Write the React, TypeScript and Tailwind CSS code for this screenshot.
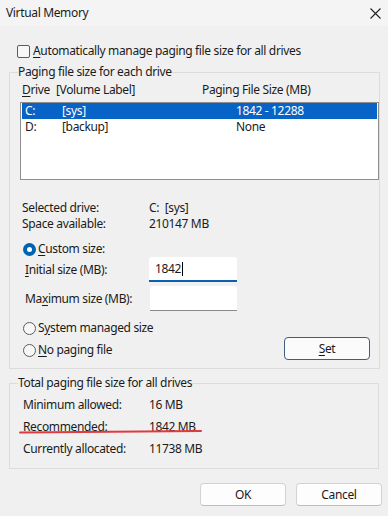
import React from "react";

function Radio({ checked }: { checked?: boolean }) {
  return checked ? (
    <span className="w-[13px] h-[13px] rounded-full bg-[#0063b1] flex items-center justify-center shrink-0">
      <span className="w-[5px] h-[5px] rounded-full bg-white" />
    </span>
  ) : (
    <span className="w-[13px] h-[13px] rounded-full border border-[#5c5c5c] bg-[#f7f7f7] shrink-0" />
  );
}

export default function App() {
  return (
    <div className="relative w-[388px] h-[516px] overflow-hidden bg-[#f0f0f0] text-[12px] leading-[16px] tracking-[-0.35px] text-[#1b1b1b] font-['Noto_Sans',sans-serif]">
      {/* Title bar */}
      <div className="h-[26px] bg-[#f4f4f4] flex items-center justify-between pl-[6px] pr-[6px]">
        <span className="text-[12px]">Virtual Memory</span>
        <svg width="11" height="11" viewBox="0 0 11 11" className="mr-[1px]">
          <path d="M0.5 0.5 L10.5 10.5 M10.5 0.5 L0.5 10.5" stroke="#222" strokeWidth="1.1" />
        </svg>
      </div>

      {/* Checkbox */}
      <div className="mt-[17px] ml-[17px] flex items-center gap-[3px] h-[16px]">
        <span className="w-[13px] h-[13px] rounded-[2px] border border-[#5c5c5c] bg-[#f7f7f7] shrink-0" />
        <span>
          <span className="underline underline-offset-2">A</span>utomatically manage paging file size for all drives
        </span>
      </div>

      {/* Group 1 */}
      <fieldset className="mt-[5px] ml-[9px] w-[370px] border border-[#dcdcdc] pb-[8px]">
        <legend className="ml-[8px] px-0 leading-[16px]">Paging file size for each drive</legend>
        <div className="mt-[2px] pl-[12px] flex h-[16px]">
          <span className="w-[34px]">
            <span className="underline underline-offset-2">D</span>rive
          </span>
          <span className="w-[146px]">[Volume Label]</span>
          <span>Paging File Size (MB)</span>
        </div>
        <div className="mt-[4px] ml-[10px] w-[359px] h-[78px] border border-[#8e8e8e] bg-white">
          <div className="flex h-[16px] items-center bg-[#0863c6] text-white pl-[3px] mx-[1px]">
            <span className="w-[37px]">C:</span>
            <span className="w-[174px]">[sys]</span>
            <span>1842 - 12288</span>
          </div>
          <div className="flex h-[16px] items-center pl-[3px] mx-[1px]">
            <span className="w-[37px]">D:</span>
            <span className="w-[174px]">[backup]</span>
            <span>None</span>
          </div>
        </div>

        <div className="mt-[20px] pl-[12px]">
          <div className="flex h-[16px]">
            <span className="w-[127px]">Selected drive:</span>
            <span>C:&nbsp;&nbsp;[sys]</span>
          </div>
          <div className="flex h-[16px]">
            <span className="w-[127px]">Space available:</span>
            <span>210147 MB</span>
          </div>
        </div>

        <div className="mt-[9px] pl-[13px] flex items-center gap-[2px] h-[16px]">
          <Radio checked />
          <span>
            <span className="underline underline-offset-2">C</span>ustom size:
          </span>
        </div>

        <div className="flex items-center h-[25px] pl-[15px]">
          <span className="w-[124px]">
            <span className="underline underline-offset-2">I</span>nitial size (MB):
          </span>
          <div className="w-[88px] h-[25px] bg-white rounded-t-[3px] border-b-2 border-[#0a5fb0] flex items-center pl-[6px]">
            <span>1842</span>
            <span className="w-[1px] h-[14px] bg-black ml-[1px]" />
          </div>
        </div>

        <div className="mt-[4px] flex items-center h-[25px] pl-[15px]">
          <span className="w-[125px]">
            Ma<span className="underline underline-offset-2">x</span>imum size (MB):
          </span>
          <div className="w-[87px] h-[25px] bg-white rounded-t-[3px] border-b border-[#8a8a8a]" />
        </div>

        <div className="mt-[9px] pl-[13px] flex items-center gap-[2px] h-[16px]">
          <Radio />
          <span>
            S<span className="underline underline-offset-2">y</span>stem managed size
          </span>
        </div>

        <div className="mt-[1px] flex items-center justify-between pr-[9px]">
          <div className="pl-[13px] mt-[3px] flex items-center gap-[2px] h-[16px]">
            <Radio />
            <span>
              <span className="underline underline-offset-2">N</span>o paging file
            </span>
          </div>
          <button className="w-[86px] h-[23px] rounded-[4px] border border-[#3f5f80] bg-[#fbfbfb] flex items-center justify-center">
            <span>
              <span className="underline underline-offset-2">S</span>et
            </span>
          </button>
        </div>
      </fieldset>

      {/* Group 2 */}
      <fieldset className="mt-[6px] ml-[9px] w-[370px] border border-[#dcdcdc] pb-[8px]">
        <legend className="ml-[8px] px-0 leading-[16px]">Total paging file size for all drives</legend>
        <div className="mt-[3px] pl-[13px]">
          <div className="flex h-[22px] items-center">
            <span className="w-[126px]">Minimum allowed:</span>
            <span>16 MB</span>
          </div>
          <div className="flex h-[22px] items-center">
            <span className="w-[126px]">Recommended:</span>
            <span>1842 MB</span>
          </div>
          <div className="flex h-[22px] items-center">
            <span className="w-[126px]">Currently allocated:</span>
            <span>11738 MB</span>
          </div>
        </div>
      </fieldset>

      {/* Buttons */}
      <div className="mt-[14px] flex justify-end gap-[10px] pr-[6px]">
        <button className="w-[86px] h-[23px] rounded-[4px] border border-[#d3d3d3] border-b-[#bdbdbd] bg-[#fdfdfd]">OK</button>
        <button className="w-[86px] h-[23px] rounded-[4px] border border-[#d3d3d3] border-b-[#bdbdbd] bg-[#fdfdfd]">Cancel</button>
      </div>

      {/* Red annotation underline */}
      <svg className="absolute left-[19px] top-[429px]" width="184" height="6" viewBox="0 0 184 6">
        <path d="M1 3.5 Q90 2.5 182 2" stroke="#e03a3e" strokeWidth="2" fill="none" strokeLinecap="round" />
      </svg>
    </div>
  );
}
